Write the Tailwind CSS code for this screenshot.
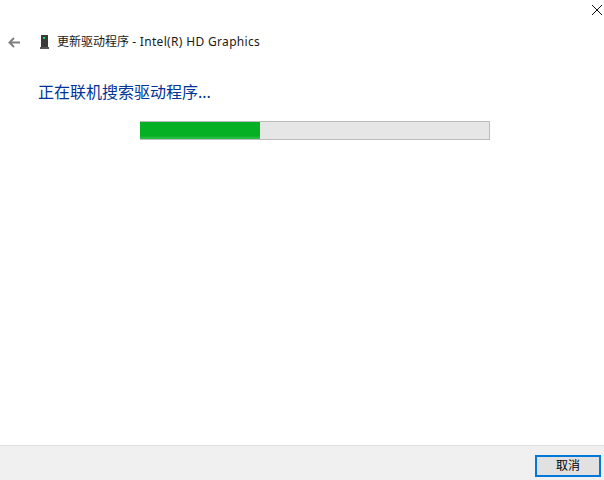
<!DOCTYPE html>
<html lang="zh-CN">
<head>
  <meta charset="UTF-8" />
  <title>更新驱动程序</title>
  <script src="https://cdn.jsdelivr.net/npm/@tailwindcss/browser@4"></script>
</head>
<body class="bg-white">
  <div class="w-[604px] h-[480px] flex flex-col overflow-hidden font-['Noto_Sans','Noto_Sans_CJK_SC',sans-serif]">

    <!-- Close -->
    <div class="h-[20px] flex justify-end pr-[2px] pt-[5px]">
      <svg width="10" height="10" viewBox="0 0 10 10" fill="none" stroke="#111" stroke-width="1"><path d="M0 0L10 10M10 0L0 10"/></svg>
    </div>

    <!-- Header -->
    <div class="h-[44px] flex items-center pl-[8px]">
      <svg width="12" height="11" viewBox="0 0 12 11" fill="none" stroke="#808080" stroke-width="2"><path d="M12 5.5H1.5M6 1L1.5 5.5L6 10"/></svg>
      <svg class="ml-[20px]" width="9" height="14" viewBox="0 0 9 14">
        <rect x="1" y="0" width="7" height="12" fill="#3a3a3a"/>
        <rect x="3" y="2" width="2" height="2" fill="#22d34a"/>
        <rect x="0" y="12" width="9" height="2" fill="#555"/>
      </svg>
      <span class="ml-[8px] text-[12px] leading-[16px] text-[#1a1a1a] whitespace-nowrap">更新驱动程序 <span class="tracking-[0.33px]">- Intel(R) HD Graphics</span></span>
    </div>

    <!-- Content -->
    <div class="flex-1 pl-[38px] pt-[16px]">
      <h1 class="text-[16px] leading-[24px] text-[#003399] whitespace-nowrap">正在联机搜索驱动程序...</h1>
      <div class="ml-[102px] mt-[17px] w-[350px] h-[19px] border border-[#bcbcbc] border-l-0 bg-[#e6e6e6]">
        <div class="w-[120px] h-full bg-[#06b025] bg-gradient-to-b from-[#06b025] from-80% to-[#2cc24a]"></div>
      </div>
    </div>

    <!-- Footer -->
    <div class="h-[35px] bg-[#f0f0f0] border-t border-[#dfdfdf] flex justify-end items-start pt-[9px] pr-[3px]">
      <button class="w-[66px] h-[22px] border-2 border-[#0078d7] bg-[#e1e1e1] text-[12px] leading-[16px] text-black flex items-center justify-center">取消</button>
    </div>
  </div>
</body>
</html>
